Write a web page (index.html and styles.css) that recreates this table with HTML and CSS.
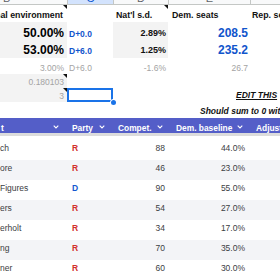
FILE: index.html
```html
<!DOCTYPE html>
<html>
<head>
<meta charset="utf-8">
<link rel="stylesheet" href="styles.css">
</head>
<body>
<div class="colhdr">
  <div class="ch ch1"><span>B</span></div>
  <div class="ch ch2 sel"><span>C</span></div>
  <div class="ch"><span>D</span></div>
  <div class="ch"><span>E</span></div>
  <div class="ch"><span></span></div>
</div>

<div class="srow r1">
  <div class="cell right c1 bold">National environment<i class="note"></i></div>
  <div class="cell"></div>
  <div class="cell bold lab3">Nat'l s.d.<i class="note"></i></div>
  <div class="cell bold lab4">Dem. seats</div>
  <div class="cell bold lab5">Rep. seats</div>
</div>

<div class="srow r2">
  <div class="cell right c1 shade big">50.00%</div>
  <div class="cell blue dplus">D+0.0</div>
  <div class="cell right shade sd">2.89%</div>
  <div class="cell right big blue">208.5</div>
  <div class="cell"></div>
</div>

<div class="srow r3">
  <div class="cell right c1 shade big">53.00%</div>
  <div class="cell blue dplus">D+6.0</div>
  <div class="cell right shade sd">1.25%</div>
  <div class="cell right big blue">235.2</div>
  <div class="cell"></div>
</div>

<div class="srow r4 muted">
  <div class="cell right c1">3.00%</div>
  <div class="cell dplus">D+6.0</div>
  <div class="cell right">-1.6%</div>
  <div class="cell right">26.7</div>
  <div class="cell"></div>
</div>

<div class="srow r5 muted">
  <div class="cell right c1 shade">0.180103<i class="note"></i></div>
  <div class="cell"></div>
  <div class="cell"></div>
  <div class="cell"></div>
  <div class="cell"></div>
</div>

<div class="srow r6 muted">
  <div class="cell right c1 shade">3<i class="note"></i></div>
  <div class="cell selcell"><i class="selbox"></i><i class="handle"></i></div>
  <div class="cell"></div>
  <div class="cell span2 edit">EDIT THIS</div>
</div>

<div class="srow r7">
  <div class="cell"></div>
  <div class="cell"></div>
  <div class="cell"></div>
  <div class="cell span2 hint">Should sum to 0 with the national environment</div>
</div>

<div class="tbar">
  <div class="th"><span>t</span><svg class="chev" width="6" height="4" viewBox="0 0 6 4"><path d="M0.7 0.7 L3 3 L5.3 0.7"/></svg></div>
  <div class="th"><span>Party</span><svg class="chev" width="6" height="4" viewBox="0 0 6 4"><path d="M0.7 0.7 L3 3 L5.3 0.7"/></svg></div>
  <div class="th"><span>Compet.</span><svg class="chev" width="6" height="4" viewBox="0 0 6 4"><path d="M0.7 0.7 L3 3 L5.3 0.7"/></svg></div>
  <div class="th"><span>Dem. baseline</span><svg class="chev" width="6" height="4" viewBox="0 0 6 4"><path d="M0.7 0.7 L3 3 L5.3 0.7"/></svg></div>
  <div class="th"><span>Adjustment</span></div>
</div>
<div class="frz"></div>

<div class="trows">
  <div class="trow first"><div class="td name">ch</div><div class="td rep">R</div><div class="td num">88</div><div class="td num">44.0%</div><div class="td"></div></div>
  <div class="trow alt"><div class="td name">ore</div><div class="td rep">R</div><div class="td num">46</div><div class="td num">23.0%</div><div class="td"></div></div>
  <div class="trow"><div class="td name">Figures</div><div class="td dem">D</div><div class="td num">90</div><div class="td num">55.0%</div><div class="td"></div></div>
  <div class="trow alt"><div class="td name">ers</div><div class="td rep">R</div><div class="td num">54</div><div class="td num">27.0%</div><div class="td"></div></div>
  <div class="trow"><div class="td name">erholt</div><div class="td rep">R</div><div class="td num">34</div><div class="td num">17.0%</div><div class="td"></div></div>
  <div class="trow alt"><div class="td name">ng</div><div class="td rep">R</div><div class="td num">70</div><div class="td num">35.0%</div><div class="td"></div></div>
  <div class="trow"><div class="td name">ner</div><div class="td rep">R</div><div class="td num">60</div><div class="td num">30.0%</div><div class="td"></div></div>
  <div class="trow alt"><div class="td name">ith</div><div class="td rep">R</div><div class="td num">52</div><div class="td num">26.0%</div><div class="td"></div></div>
</div>
</body>
</html>
```
FILE: styles.css
```css
html, body { margin: 0; padding: 0; }
body {
  width: 280px;
  height: 280px;
  overflow: hidden;
  background: #fff;
  font-family: "Liberation Sans", Arial, sans-serif;
  color: #000;
}

/* spreadsheet column header strip */
.colhdr {
  display: grid;
  grid-template-columns: 67px 46px 55px 82px 30px;
  height: 4px;
  background: #f8f9fa;
  border-bottom: 1px solid #c4c7c5;
  overflow: hidden;
}
.ch {
  display: flex;
  justify-content: center;
  align-items: flex-end;
  overflow: hidden;
  font-size: 11px;
  line-height: 1;
  color: #5f6368;
  border-left: 1px solid #c4c7c5;
  box-sizing: border-box;
}
.ch1 { border-left: 0; justify-content: flex-start; padding-left: 3px; }
.ch2 { background: #d3e3fd; color: #0b57d0; }

/* sheet cells */
.srow {
  display: grid;
  grid-template-columns: 67px 46px 55px 82px 30px;
}
.r1 { height: 17px; font-size: 8.8px; }
.r2, .r3 { height: 18px; font-size: 8.5px; }
.r4 { height: 16px; font-size: 8.5px; }
.r5, .r6 { height: 14px; font-size: 8.5px; }
.r7 { height: 15px; font-size: 8.5px; }

.cell {
  display: flex;
  align-items: flex-end;
  line-height: 1;
  white-space: nowrap;
  overflow: hidden;
  position: relative;
  min-width: 0;
  box-sizing: border-box;
}
.right { justify-content: flex-end; padding-right: 2px; }
.c1 { padding-right: 3px; }
.bold { font-weight: bold; color: #111; }
.shade { background: #f3f3f3; }
.blue { color: #1155cc; font-weight: bold; }
.muted { color: #a3a3a3; }

.r1 .cell { padding-bottom: 2px; }
.r1 .c1 { padding-right: 4px; }
.lab3 { padding-left: 3px; }
.lab4 { padding-left: 4px; }
.lab5 { padding-left: 2px; }

.big { font-size: 12px; font-weight: bold; }
.r2 .cell { padding-bottom: 1.7px; }
.r2 .big { padding-bottom: 1px; }
.r3 .cell { padding-bottom: 2.7px; }
.r3 .big { padding-bottom: 2px; }
.dplus { padding-left: 2px; }
.sd { font-weight: bold; color: #111; font-size: 9px; }

.r4 .cell, .r5 .cell, .r6 .cell { padding-bottom: 1.7px; }

.span2 { grid-column: span 2; }
.edit {
  padding-left: 68px;
  font-weight: bold;
  font-style: italic;
  text-decoration: underline;
  color: #111;
}
.r6 .edit { padding-bottom: 2.2px; }
.hint {
  padding-left: 32px;
  padding-bottom: 1.2px;
  font-weight: bold;
  font-style: italic;
  color: #111;
}

/* comment / note indicator */
.note {
  position: absolute;
  top: 0;
  right: 0;
  width: 0;
  height: 0;
  border-left: 4px solid transparent;
  border-top: 4px solid #111;
}

/* selected cell */
.selcell { overflow: visible; }
.selbox {
  position: absolute;
  left: 0;
  top: 0;
  right: 0;
  bottom: 0;
  border: 2px solid #1a73e8;
  box-sizing: border-box;
}
.handle {
  position: absolute;
  right: -3px;
  bottom: -3px;
  width: 5px;
  height: 5px;
  border-radius: 50%;
  background: #1a73e8;
  box-shadow: 0 0 0 1px #fff;
  z-index: 2;
}

/* table header bar */
.tbar {
  display: grid;
  grid-template-columns: 68px 46px 58px 80px 28px;
  height: 15px;
  margin-top: 1px;
  background: #545ec8;
  color: #fff;
  font-weight: bold;
  font-size: 8.4px;
  line-height: 1;
}
.th {
  display: flex;
  align-items: flex-end;
  padding: 0 9px 1px 4px;
  overflow: hidden;
  white-space: nowrap;
  min-width: 0;
}
.th:first-child { padding-left: 1px; }
.chev {
  margin-left: auto;
  margin-bottom: 3px;
  flex: none;
  fill: none;
  stroke: #fff;
  stroke-width: 1.1;
}
.frz { height: 3px; background: #dcdcdc; }

/* table body */
.trow {
  display: grid;
  grid-template-columns: 68px 46px 58px 80px 28px;
  height: 20px;
  font-size: 8.5px;
  color: #3c4043;
  line-height: 1;
}
.trow.first { height: 24px; }
.trow.alt { background: #f3f4f7; }
.td {
  display: flex;
  align-items: flex-end;
  padding-bottom: 7.2px;
  white-space: nowrap;
  overflow: hidden;
}
.name { padding-left: 0; }
.rep, .dem { padding-left: 4px; font-weight: bold; }
.rep { color: #d2302a; }
.dem { color: #1457d0; }
.num { justify-content: flex-end; padding-right: 7px; }
```
